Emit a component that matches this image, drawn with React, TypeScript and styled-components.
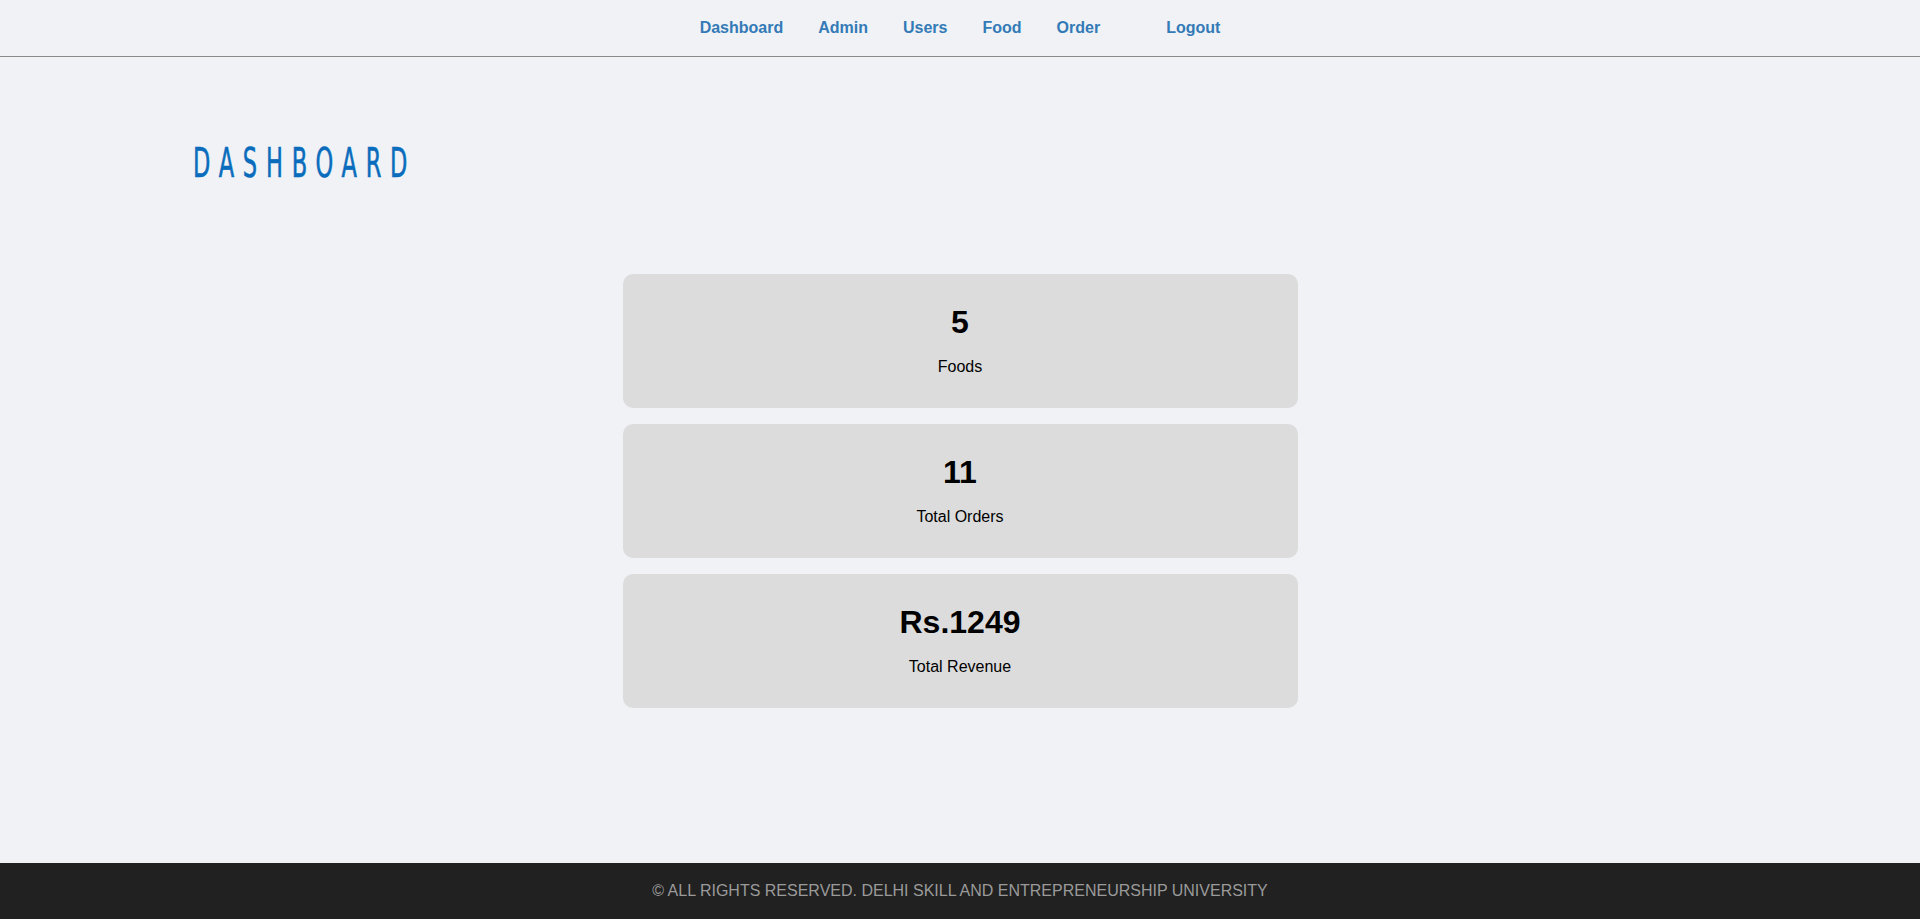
import React from "react";
import styled, { createGlobalStyle } from "styled-components";

const GlobalStyle = createGlobalStyle`
  html, body {
    margin: 0;
    padding: 0;
    background: #f0f2f5;
    font-family: "Liberation Sans", Arial, sans-serif;
  }
  * { box-sizing: border-box; }
`;

const Page = styled.div`
  min-height: 100vh;
  display: flex;
  flex-direction: column;
  background: #f0f2f5;
`;

const NavBar = styled.nav`
  height: 57px;
  border-bottom: 1px solid #8a8a8a;
  display: flex;
  justify-content: center;
  align-items: center;
  gap: 35px;
  padding-bottom: 1px;
`;

const NavLink = styled.a<{ $spaced?: boolean }>`
  color: #337ab7;
  font-family: "Liberation Sans", Arial, sans-serif;
  font-weight: 700;
  font-size: 16px;
  line-height: 18px;
  text-decoration: none;
  cursor: pointer;
  margin-left: ${(p) => (p.$spaced ? "31px" : "0")};
`;

const Main = styled.main`
  flex: 1;
  display: flex;
  flex-direction: column;
`;

const TitleRow = styled.div`
  padding: 83px 0 0 193px;
  height: 127px;
`;

const Title = styled.h1`
  margin: 0;
  display: inline-block;
  white-space: nowrap;
  font-family: "DejaVu Sans Condensed", "DejaVu Sans", sans-serif;
  font-stretch: condensed;
  font-weight: 400;
  font-size: 41px;
  line-height: 46px;
  letter-spacing: 14.4px;
  color: #0a6cbc;
  -webkit-text-stroke: 0.6px #0a6cbc;
  transform: scaleX(0.61);
  transform-origin: left center;
`;

const CardList = styled.section`
  margin-top: 90px;
  display: flex;
  flex-direction: column;
  align-items: center;
  gap: 16px;
`;

const Card = styled.div`
  width: 675px;
  height: 134px;
  background: #dcdcdc;
  border-radius: 10px;
  display: flex;
  flex-direction: column;
  align-items: center;
  padding-top: 30px;
  color: #000;
`;

const Value = styled.h2`
  margin: 0;
  font-family: "Liberation Sans", Arial, sans-serif;
  font-weight: 700;
  font-size: 32px;
  line-height: 37px;
`;

const Label = styled.p`
  margin: 17px 0 0;
  font-family: "Liberation Sans", Arial, sans-serif;
  font-size: 16px;
  line-height: 18px;
`;

const Footer = styled.footer`
  height: 56px;
  background: #212121;
  display: flex;
  align-items: center;
  justify-content: center;
  color: #9a9a9a;
  font-family: "Liberation Sans", Arial, sans-serif;
  font-size: 16px;
  padding-bottom: 1px;
`;

const links = ["Dashboard", "Admin", "Users", "Food", "Order"];

const stats = [
  { value: "5", label: "Foods" },
  { value: "11", label: "Total Orders" },
  { value: "Rs.1249", label: "Total Revenue" },
];

export default function App() {
  return (
    <Page>
      <GlobalStyle />
      <NavBar>
        {links.map((l) => (
          <NavLink key={l}>{l}</NavLink>
        ))}
        <NavLink $spaced>Logout</NavLink>
      </NavBar>
      <Main>
        <TitleRow>
          <Title>DASHBOARD</Title>
        </TitleRow>
        <CardList>
          {stats.map((s) => (
            <Card key={s.label}>
              <Value>{s.value}</Value>
              <Label>{s.label}</Label>
            </Card>
          ))}
        </CardList>
      </Main>
      <Footer>© ALL RIGHTS RESERVED. DELHI SKILL AND ENTREPRENEURSHIP UNIVERSITY</Footer>
    </Page>
  );
}
